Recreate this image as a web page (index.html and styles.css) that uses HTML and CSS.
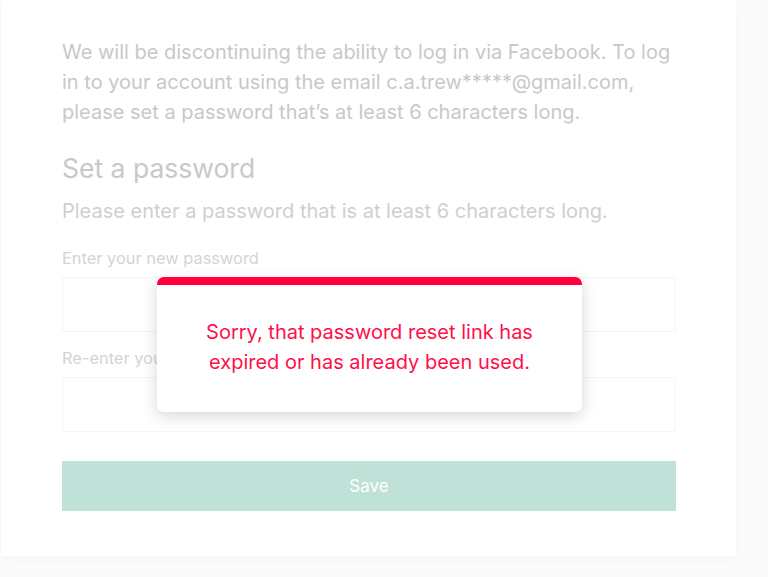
FILE: index.html
```html
<!DOCTYPE html>
<html>
<head>
<meta charset="utf-8">
<link rel="stylesheet" href="styles.css">
</head>
<body>
<div class="page">
  <div class="card">
    <p class="intro">We will be discontinuing the ability to log in via Facebook. To log in to your account using the email c.a.trew*****@gmail.com, please set a password that’s at least 6 characters long.</p>
    <h2 class="title">Set a password</h2>
    <p class="sub">Please enter a password that is at least 6 characters long.</p>
    <label class="label">Enter your new password</label>
    <div class="input"></div>
    <label class="label">Re-enter your new password</label>
    <div class="input"></div>
    <div class="btn">Save</div>
  </div>
  <div class="modal">
    <div class="modal-msg">Sorry, that password reset link has expired or has already been used.</div>
  </div>
</div>
</body>
</html>
```

FILE: styles.css
```css
* { box-sizing: border-box; }
html, body { margin: 0; padding: 0; }
body {
  background: #fafafa;
  font-family: Inter, "Noto Sans", sans-serif;
  width: 768px;
  height: 577px;
  overflow: hidden;
}
.page { position: relative; height: 577px; }
.card {
  margin-left: 1px;
  width: 735px;
  height: 556px;
  background: #fff;
  padding: 37px 60px 0 61px;
  box-shadow: 0 4px 12px rgba(0,0,0,0.02);
  display: flex;
  flex-direction: column;
}
.intro {
  margin: 0;
  font-size: 20px;
  line-height: 30px;
  color: #c9c8c8;
}
.title {
  margin: 24px 0 0;
  font-weight: 400;
  font-size: 26.5px;
  line-height: 34px;
  color: #c9c8c8;
}
.sub {
  margin: 12px 0 0;
  font-size: 20px;
  line-height: 28px;
  color: #cfcfcf;
}
.label {
  display: block;
  margin-top: 22px;
  font-size: 16.4px;
  line-height: 22px;
  color: #d4d4d4;
}
.input {
  margin-top: 8px;
  height: 55px;
  border: 1px solid #f5f5f5;
}
.label + .input + .label { margin-top: 15px; }
.btn {
  margin-top: 29px;
  height: 50px;
  background: #c0e1d7;
  color: #fff;
  font-size: 17px;
  display: flex;
  align-items: center;
  justify-content: center;
}
.modal {
  position: absolute;
  left: 157px;
  top: 277px;
  width: 425px;
  height: 135px;
  background: #fff;
  border-radius: 7px;
  border-top: 8px solid #ff003c;
  box-shadow: 0 4px 16px rgba(0,0,0,0.16);
  display: flex;
  align-items: center;
  justify-content: center;
  padding: 0 30px 3px;
}
.modal-msg {
  text-align: center;
  color: #ff0f48;
  font-size: 20px;
  line-height: 30px;
}
```
